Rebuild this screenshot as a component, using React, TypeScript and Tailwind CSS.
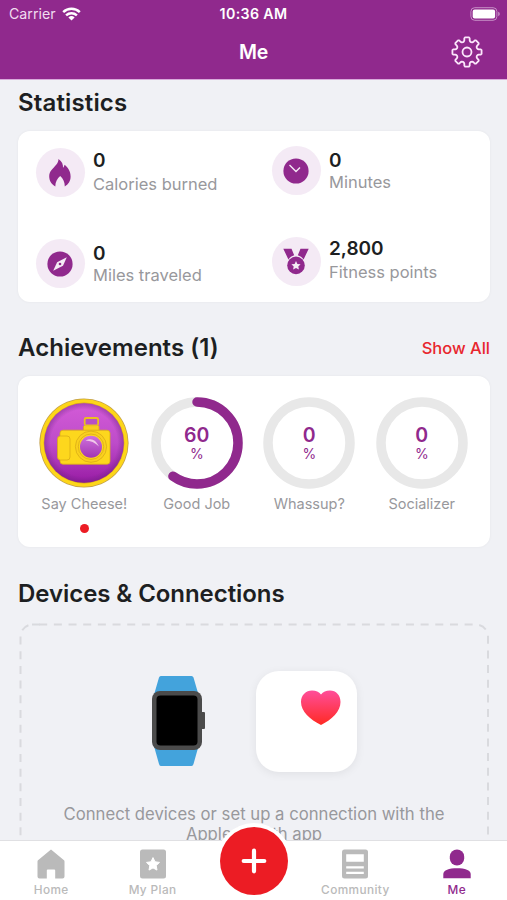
import type { ReactNode } from 'react';

const STATS = [
  { id: 'calories', value: '0', label: 'Calories burned', icon: <FlameIcon />, iconClass: 'mt-[17px]', textClass: 'mt-[18px]', labelClass: '' },
  { id: 'minutes', value: '0', label: 'Minutes', icon: <ClockIcon />, iconClass: 'mt-[15px]', textClass: 'mt-[18px]', labelClass: '-mt-[2px]' },
  { id: 'miles', value: '0', label: 'Miles traveled', icon: <CompassIcon />, iconClass: 'mt-[22px]', textClass: 'mt-[25px]', labelClass: '-mt-[2px]' },
  { id: 'points', value: '2,800', label: 'Fitness points', icon: <MedalIcon />, iconClass: 'mt-[20px]', textClass: 'mt-[20px]', labelClass: '' },
];

const GOALS = [
  { label: 'Good Job', percent: 60 },
  { label: 'Whassup?', percent: 0 },
  { label: 'Socializer', percent: 0 },
];

export default function App() {
  return (
    <div className="flex h-[900px] w-[507px] flex-col overflow-hidden bg-[#f0f1f5] font-['Inter',sans-serif] text-[#1d1f22]">
      <Header />
      <main className="min-h-0 flex-1 overflow-hidden pl-[18px] pr-[17px]">
        <h2 className="mt-[8px] h-[30px] text-[24px] font-semibold leading-[30px] tracking-[0.15px]">Statistics</h2>
        <section className="mt-[13px] grid h-[171px] grid-cols-2 grid-rows-[86px_85px] rounded-[12px] bg-white shadow-[0_0_3px_rgba(0,0,0,0.05)]">
          {STATS.map((s) => (
            <div key={s.id} className="flex pl-[17.5px]">
              <div className={`flex size-[49px] shrink-0 items-center justify-center rounded-full bg-[#f4eaf5] ${s.iconClass}`}>
                {s.icon}
              </div>
              <div className={`ml-[8.5px] whitespace-nowrap ${s.textClass}`}>
                <div className="text-[19px] font-semibold leading-[23px]">{s.value}</div>
                <div className={`text-[16.5px] leading-[24px] text-[#98989c] ${s.labelClass}`}>{s.label}</div>
              </div>
            </div>
          ))}
        </section>

        <div className="mt-[31px] flex h-[30px] items-center justify-between">
          <h2 className="text-[24px] font-semibold leading-[30px] tracking-[0.05px]">Achievements (1)</h2>
          <a className="text-[16.5px] font-medium leading-[30px] text-[#e8262e]">Show All</a>
        </div>
        <section className="mt-[13px] grid h-[171px] grid-cols-4 rounded-[12px] bg-white pl-[10px] pr-[12px] pt-[20px] shadow-[0_0_3px_rgba(0,0,0,0.05)]">
          <div className="flex flex-col items-center">
            <CameraBadge />
            <AchievementLabel>Say Cheese!</AchievementLabel>
            <span className="mt-[10px] size-[9px] rounded-full bg-[#ec1c24]" />
          </div>
          {GOALS.map((g) => (
            <div key={g.label} className="flex flex-col items-center">
              <ProgressRing percent={g.percent} />
              <AchievementLabel>{g.label}</AchievementLabel>
            </div>
          ))}
        </section>

        <h2 className="mt-[32px] h-[30px] text-[24px] font-semibold leading-[30px] tracking-[-0.06px]">Devices &amp; Connections</h2>
        <section className="relative mt-[14px] h-[260px]">
          <DashedOutline />
          <div className="flex pt-[48px]">
            <div className="ml-[133px] mt-[4px]">
              <WatchIcon />
            </div>
            <div className="ml-[50px] size-[101px] rounded-[23px] bg-white shadow-[0_2px_10px_rgba(0,0,0,0.07)]">
              <HeartIcon />
            </div>
          </div>
          <p className="mt-[32px] text-center text-[16.7px] leading-[20px] text-[#98989c]">
            Connect devices or set up a connection with the
            <br />
            Apple Health app
          </p>
        </section>
      </main>
      <TabBar />
    </div>
  );
}

function Header() {
  return (
    <header className="h-[80px] shrink-0 border-b border-[#d9abdb] bg-[#90298d] text-white">
      <div className="grid h-[27px] grid-cols-3 items-center">
        <div className="flex items-center gap-[6px] pl-[9px]">
          <span className="text-[14.2px] leading-[27px] text-[#f0dcf0]">Carrier</span>
          <WifiIcon />
        </div>
        <div className="text-center text-[14.2px] font-semibold leading-[27px] tracking-[0.35px]">10:36 AM</div>
        <div className="flex justify-end pr-[7px]">
          <BatteryIcon />
        </div>
      </div>
      <div className="grid h-[51px] grid-cols-3 items-center">
        <span />
        <h1 className="text-center text-[19.5px] font-semibold leading-[51px] tracking-[-0.3px]">Me</h1>
        <div className="flex justify-end pb-[2px] pr-[23px]">
          <GearIcon />
        </div>
      </div>
    </header>
  );
}

function AchievementLabel({ children }: { children: ReactNode }) {
  return <div className="mt-[5px] whitespace-nowrap text-[14.5px] leading-[20px] text-[#98989c]">{children}</div>;
}

function ProgressRing({ percent }: { percent: number }) {
  return (
    <div className="relative mt-[0.5px] size-[92px]">
      <svg viewBox="0 0 92 92" className="size-full -rotate-90">
        <circle cx="46" cy="46" r="41" fill="none" stroke="#e8e8e8" strokeWidth="9.5" />
        {percent > 0 && (
          <circle
            cx="46"
            cy="46"
            r="41"
            fill="none"
            stroke="#90298d"
            strokeWidth="9.5"
            strokeLinecap="round"
            pathLength="100"
            strokeDasharray={`${percent} 100`}
          />
        )}
      </svg>
      <div className="absolute inset-0 flex flex-col items-center pt-[27px] text-[#90298d]">
        <span className="text-[19.5px] font-semibold leading-[23px]">{percent}</span>
        <span className="text-[14px] leading-[14px]">%</span>
      </div>
    </div>
  );
}

function TabBar() {
  return (
    <nav className="relative grid h-[60px] shrink-0 grid-cols-5 border-t border-[#e0e0e3] bg-white">
      <Tab label="Home">
        <svg width="28" height="30" viewBox="0 0 28 30" fill="#bababa">
          <path d="M14 0.5 27 11.2Q27.5 11.6 27.5 12.4V27.5Q27.5 29.5 25.5 29.5H18.2V21.5Q18.2 20.5 17.2 20.5H10.8Q9.8 20.5 9.8 21.5V29.5H2.5Q.5 29.5 .5 27.5V12.4Q.5 11.6 1 11.2Z" />
        </svg>
      </Tab>
      <Tab label="My Plan">
        <svg width="28" height="30" viewBox="0 0 28 30">
          <rect x="1" y=".5" width="26" height="29" rx="2.5" fill="#bababa" />
          <path d="m14 8.6 2 4.2 4.5.6-3.3 3.2.8 4.5L14 18.9l-4 2.2.8-4.5-3.300-3.200 4.500-.6Z" fill="#fff" stroke="#fff" strokeLinejoin="round" />
        </svg>
      </Tab>
      <span />
      <Tab label="Community">
        <svg width="28" height="30" viewBox="0 0 28 30">
          <rect x="1" y=".5" width="26" height="29" rx="2.5" fill="#bababa" />
          <path d="M5.2 5.2h17.600v7.600H5.200zM5.200 17.200h17.600v2.200H5.200zM5.200 22.700h17.600v2.200H5.200z" fill="#fff" />
        </svg>
      </Tab>
      <Tab label="Me" active>
        <svg width="28" height="30" viewBox="0 0 28 30" fill="#90298d">
          <rect x="6.800" y=".5" width="14.400" height="16" rx="7.200" />
          <path d="M.3 29.300V25C.3 21 6 19.200 14 19.200S27.700 21 27.700 25V29.300Z" />
        </svg>
      </Tab>
      <button
        aria-label="Add"
        className="absolute left-[216px] top-[-18px] flex size-[76px] items-center justify-center rounded-full bg-white"
      >
        <span className="flex size-[68px] items-center justify-center rounded-full bg-[#ec1c24]">
          <svg width="28" height="28" viewBox="0 0 28 28" stroke="#fff" strokeWidth="4.2" strokeLinecap="round">
            <path d="M14 3.700v20.600M3.700 14h20.600" />
          </svg>
        </span>
      </button>
    </nav>
  );
}

function Tab({ label, active, children }: { label: string; active?: boolean; children: ReactNode }) {
  return (
    <div className="flex flex-col items-center pl-px pt-[8px]">
      {children}
      <span className={`mt-[4px] text-[11.8px] font-medium leading-[15px] tracking-[0.4px] ${active ? 'text-[#90298d]' : 'text-[#bababa]'}`}>
        {label}
      </span>
    </div>
  );
}

function WifiIcon() {
  return (
    <svg width="19" height="14" viewBox="0 0 19 14" fill="none" stroke="#fff" strokeWidth="2.5">
      <path d="M1.2 5.1a12 12 0 0 1 16.6 0M4.1 8.3a8 8 0 0 1 10.8 0" />
      <path d="M9.5 13.6 6.4 10.5a4.5 4.5 0 0 1 6.2 0Z" fill="#fff" stroke="none" />
    </svg>
  );
}

function BatteryIcon() {
  return (
    <svg width="30" height="14" viewBox="0 0 30 14">
      <rect x=".9" y=".7" width="26" height="12.6" rx="3.8" fill="none" stroke="#c68fc6" />
      <rect x="2.7" y="2.5" width="22.4" height="9" rx="2" fill="#fff" />
      <path d="M28.2 4.8q1.6.6 1.6 2.2t-1.6 2.2Z" fill="#c68fc6" />
    </svg>
  );
}

// One tooth outline, repeated every 45° around the hub.
const GEAR_TOOTH = [
  [10.6, -22.5],
  [10.9, -17],
  [12, -13],
  [14, -11],
  [14.7, -7.5],
  [14.7, 7.5],
  [14, 11],
  [12, 13],
  [10.9, 17],
];

function gearPath() {
  const points: string[] = [];
  for (let i = 0; i < 8; i++) {
    for (const [r, deg] of GEAR_TOOTH) {
      const a = ((deg + i * 45) * Math.PI) / 180;
      points.push(`${(17 + r * Math.sin(a)).toFixed(2)} ${(17 - r * Math.cos(a)).toFixed(2)}`);
    }
  }
  return `M${points.join('L')}Z`;
}

function GearIcon() {
  return (
    <svg width="34" height="34" viewBox="0 0 34 34" fill="none" stroke="#fbe6fb" strokeWidth="1.8" strokeLinejoin="round">
      <path d={gearPath()} />
      <circle cx="17" cy="17" r="4.5" />
    </svg>
  );
}

function FlameIcon() {
  return (
    <svg width="24" height="30" viewBox="0 0 24 30" fill="#90298d">
      <path d="M10.5 1C14 3.5 15.3 6.5 15 9.8 15.8 9.2 16.2 8 16.5 6.8 20 9.5 22.6 13.4 22.6 18.5 22.6 23 20.3 26.5 16.8 28.4 16.8 24 15 20.500 12.200 18 9.300 20.500 7.300 24 7.300 28.400 3.500 26.500 1.200 22.700 1.200 18.300 1.200 13 5.200 10.600 8.200 6.800 9.700 5 10.500 3.200 10.500 1Z" />
    </svg>
  );
}

function ClockIcon() {
  return (
    <svg width="26" height="26" viewBox="0 0 26 26">
      <circle cx="13" cy="13" r="12.6" fill="#90298d" />
      <path d="m6.500 7 6.500 6.500 4-4" fill="none" stroke="#f4eaf5" strokeWidth="1.4" />
    </svg>
  );
}

function CompassIcon() {
  return (
    <svg width="26" height="26" viewBox="0 0 26 26">
      <circle cx="13" cy="13" r="12.6" fill="#90298d" />
      <path d="M19.800 6.200 16 14.800 6.200 19.800 10.100 11.200Z" fill="#f4eaf5" />
      <circle cx="13" cy="13" r="1.3" fill="#90298d" />
    </svg>
  );
}

function MedalIcon() {
  return (
    <svg width="26" height="27" viewBox="0 0 26 27">
      <path d="M.3.8H8.500L11.200 7.300C8.800 8 7 9.200 5.400 11.400ZM25.700.8H17.500L14.800 7.300C17.200 8 19 9.200 20.600 11.400Z" fill="#90298d" />
      <circle cx="13" cy="17.400" r="8.800" fill="#90298d" />
      <path d="m13 13 1.400 2.900 3.200.4-2.300 2.200.6 3.100-2.900-1.500-2.900 1.500.6-3.100-2.300-2.200 3.200-.4Z" fill="#f4eaf5" />
    </svg>
  );
}

function CameraBadge() {
  return (
    <svg width="92" height="92" viewBox="0 0 92 92" className="mt-[0.5px] shrink-0">
      <defs>
        <linearGradient id="badge" x1="0" y1="0" x2="0" y2="1">
          <stop offset="0" stopColor="#d45bd8" />
          <stop offset=".5" stopColor="#bd4cc9" />
          <stop offset="1" stopColor="#981ba4" />
        </linearGradient>
        <radialGradient id="edge">
          <stop offset=".84" stopColor="#63207a" stopOpacity="0" />
          <stop offset="1" stopColor="#63207a" stopOpacity=".4" />
        </radialGradient>
        <linearGradient id="lens" x1="0" y1="0" x2="0" y2="1">
          <stop offset="0" stopColor="#cf72dc" />
          <stop offset="1" stopColor="#a235b5" />
        </linearGradient>
      </defs>
      <circle cx="46" cy="46" r="44.600" fill="#c3a04a" />
      <circle cx="46" cy="46" r="43.800" fill="#fdd619" />
      <circle cx="46" cy="46" r="40.400" fill="#d8a51c" />
      <circle cx="46" cy="46" r="39.800" fill="url(#badge)" />
      <circle cx="46" cy="46" r="39.800" fill="url(#edge)" />
      <g stroke="#d9ac18" strokeWidth=".8">
        <path d="M45.500 29V33.500h15.500V29" fill="#f9cf1d" />
        <rect x="46.700" y="21" width="13.400" height="7.400" rx="1.500" fill="#b850c4" stroke="#eac01e" strokeWidth="1.800" />
        <path d="M25 33.200h44q3 0 3 3v28q0 3-3 3H25q-3 0-3-3v-28q0-3 3-3Z" fill="#fdd71d" />
        <rect x="19.500" y="39" width="12.500" height="24" rx="3" fill="#fdd71d" />
        <circle cx="53" cy="49.700" r="15.600" fill="#fad01d" />
        <circle cx="53" cy="49.700" r="12.700" fill="#fdd71d" />
      </g>
      <circle cx="53" cy="49.700" r="11" fill="url(#lens)" />
      <path d="M47.500 43.500q8.500-4.500 13.500 6Q55 43.500 47.500 43.500Z" fill="#fbe4ef" opacity=".8" />
    </svg>
  );
}

function DashedOutline() {
  return (
    <svg className="absolute left-0 top-0" width="472" height="260" viewBox="0 0 472 260" fill="none" stroke="#d9dade" strokeWidth="2" strokeDasharray="8 6.67">
      <path d="M21.200 1.500H458a12 12 0 0 1 12 12V260" />
      <path d="M2.500 259V13.500a12 12 0 0 1 12-12" strokeDashoffset="12" />
      <path d="M14 1.500h8" strokeDasharray="none" />
    </svg>
  );
}

function WatchIcon() {
  return (
    <svg width="55" height="92" viewBox="0 0 55 92">
      <path d="M9.800 1H40.500Q42 1 42.500 2.500L47 18V73L42.500 89Q42 91 40.500 91H9.800Q8.500 91 8 89L3.500 73V18L8 2.500Q8.500 1 9.800 1Z" fill="#43a3dc" />
      <rect x="49" y="37" width="5" height="17" rx="1" fill="#4b4b4b" />
      <rect x="1" y="16" width="50" height="59" rx="8" fill="#4b4b4b" />
      <rect x="5.500" y="20.500" width="41" height="50" rx="4" fill="#000" />
    </svg>
  );
}

function HeartIcon() {
  return (
    <svg width="101" height="101" viewBox="0 0 101 101">
      <defs>
        <linearGradient id="heart" x1="0" y1="0" x2="0" y2="1">
          <stop offset="0" stopColor="#ff4e9a" />
          <stop offset="1" stopColor="#ff2a23" />
        </linearGradient>
      </defs>
      <path d="M65 54C54 48.500 45 40.500 45 31 45 24 50 19.500 56 19.500 60 19.500 63 21 65 23.500 67 21 70 19.500 74 19.500 80 19.500 84.500 24 84.500 31 84.500 40.500 76 48.500 65 54Z" fill="url(#heart)" />
    </svg>
  );
}
